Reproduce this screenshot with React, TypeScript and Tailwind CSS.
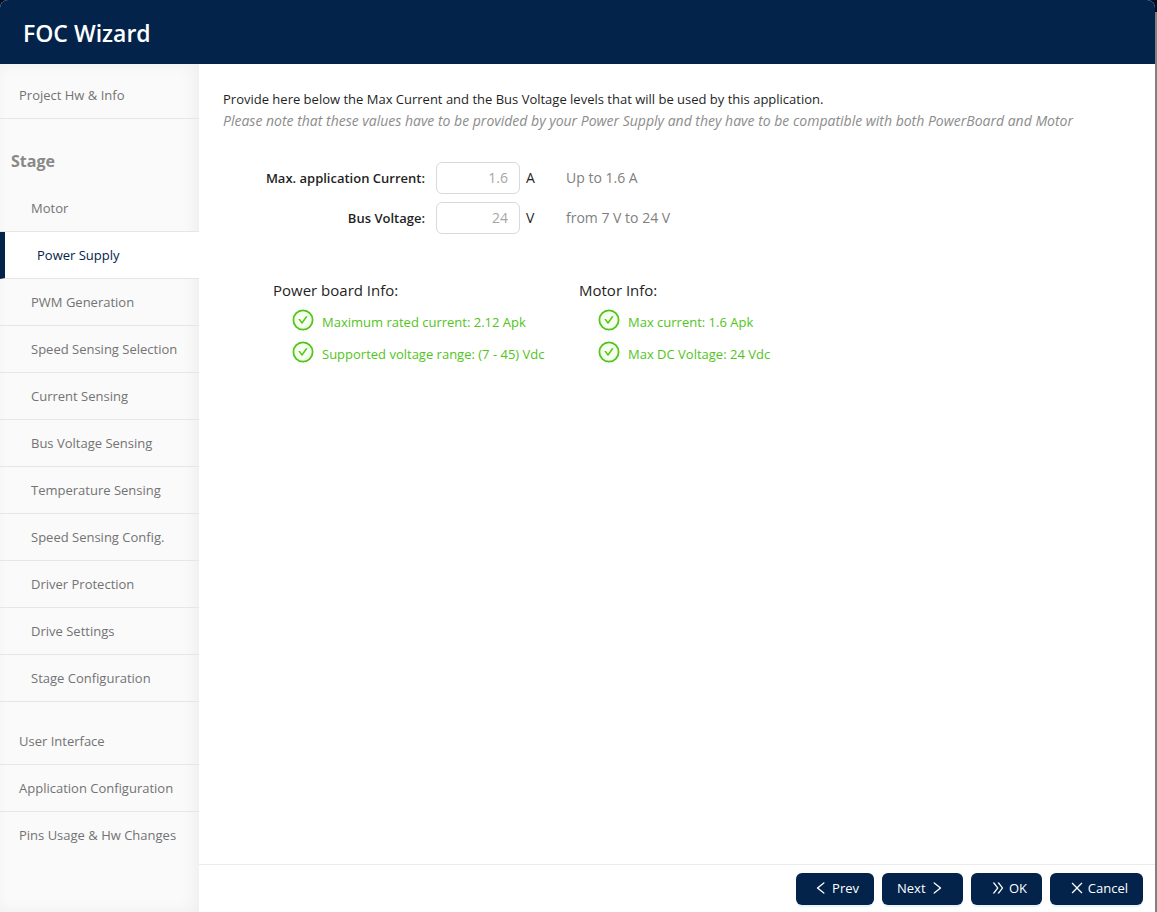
import { useId, useState } from "react";
import {
  AiOutlineClose,
  AiOutlineDoubleRight,
  AiOutlineLeft,
  AiOutlineRight,
} from "react-icons/ai";

const stageSteps = [
  "Motor",
  "Power Supply",
  "PWM Generation",
  "Speed Sensing Selection",
  "Current Sensing",
  "Bus Voltage Sensing",
  "Temperature Sensing",
  "Speed Sensing Config.",
  "Driver Protection",
  "Drive Settings",
  "Stage Configuration",
];

const finalSteps = ["User Interface", "Application Configuration", "Pins Usage & Hw Changes"];

function NavItem({ label, nested = false, active = false, last = false }: {
  label: string;
  nested?: boolean;
  active?: boolean;
  last?: boolean;
}) {
  const tone = active
    ? "border-l-[5px] border-l-[#03234b] bg-white pl-8 text-[#03234b]"
    : nested
      ? "pl-[31px] text-[#737373]"
      : "pl-[19px] text-[#737373]";
  return (
    <li>
      <a
        href="#"
        aria-current={active ? "step" : undefined}
        className={`flex h-[47px] items-center border-b whitespace-nowrap ${tone} ${last ? "border-b-transparent" : "border-b-[#e6e6e6]"}`}
      >
        {label}
      </a>
    </li>
  );
}

function CheckIcon() {
  return (
    <svg viewBox="0 0 1024 1024" className="size-6 shrink-0" aria-hidden="true">
      <circle cx="512" cy="512" r="410" fill="#f6ffed" stroke="#52c41a" strokeWidth="76" />
      <path
        fill="#52c41a"
        d="M699 353h-46.9c-10.2 0-19.9 4.9-25.9 13.3L469 584.3l-71.2-98.8c-6-8.3-15.6-13.3-25.9-13.3H325c-6.5 0-10.3 7.4-6.5 12.7l124.6 172.8a31.8 31.8 0 0 0 51.7 0l210.6-292c3.9-5.3.1-12.7-6.4-12.7z"
      />
    </svg>
  );
}

function Field({ label, unit, hint, initial }: {
  label: string;
  unit: string;
  hint: string;
  initial: string;
}) {
  const id = useId();
  const [value, setValue] = useState(initial);
  return (
    <div className="flex h-8 items-center text-[14px]">
      <label htmlFor={id} className="w-[202px] text-right text-[13px] font-semibold">
        {label}
      </label>
      <input
        id={id}
        value={value}
        onChange={(e) => setValue(e.target.value)}
        className="ml-[11px] h-8 w-[84px] rounded-md border border-[#d9d9d9] bg-white px-[11px] pb-[2px] text-right text-[#a6a6a6]"
      />
      <span className="ml-[6px] w-10">{unit}</span>
      <span className="text-[#808080]">{hint}</span>
    </div>
  );
}

function InfoBlock({ title, items }: { title: string; items: string[] }) {
  return (
    <section className="w-[306px]">
      <h2 className="text-[15px] leading-6 font-medium">{title}</h2>
      <ul className="pt-[2px] pl-[18px] text-[#52c41a]">
        {items.map((item) => (
          <li key={item} className="flex h-8 items-center gap-[7px] whitespace-nowrap">
            <CheckIcon />
            <span className="pt-1">{item}</span>
          </li>
        ))}
      </ul>
    </section>
  );
}

const buttonClass =
  "flex h-8 items-center rounded-md bg-[#03234b] pb-[2px] text-white shadow-[0_2px_0_#e6f4ff]";

export default function App() {
  return (
    <div className="flex min-h-screen bg-linear-to-b from-[#020f24] from-[12px] to-[#808080] to-[12px] pr-[2px] font-['Open_Sans','Noto_Sans',sans-serif] text-[13px] leading-[22px] text-[#1f1f1f]">
      <div className="flex grow flex-col overflow-hidden rounded-t-lg bg-white">
        <header className="flex h-16 items-center bg-[#03234b] px-[23px]">
          <h1 className="pt-[2px] text-[23px] leading-8 font-semibold text-white">FOC Wizard</h1>
        </header>
        <div className="flex grow">
          <nav
            aria-label="Wizard steps"
            className="w-[199px] shrink-0 bg-[#fafafa] pt-2 shadow-[inset_-4px_0_16px_rgba(0,0,0,0.05)]"
          >
            <ul>
              <NavItem label="Project Hw & Info" />
            </ul>
            <h2 className="px-[11px] pt-[30px] pb-3 text-[16px] leading-6 font-bold text-[#888888]">
              Stage
            </h2>
            <ul>
              {stageSteps.map((step) => (
                <NavItem key={step} label={step} nested active={step === "Power Supply"} />
              ))}
            </ul>
            <ul className="mt-4">
              {finalSteps.map((step, i) => (
                <NavItem key={step} label={step} last={i === finalSteps.length - 1} />
              ))}
            </ul>
          </nav>
          <div className="flex grow flex-col">
            <main className="grow px-6 pt-6">
              <p>
                Provide here below the Max Current and the Bus Voltage levels that will be used by this
                application.
              </p>
              <p className="text-[14px] text-[#8c8c8c] italic">
                Please note that these values have to be provided by your Power Supply and they have to be
                compatible with both PowerBoard and Motor
              </p>
              <div className="mt-[30px] flex flex-col gap-2">
                <Field label="Max. application Current:" unit="A" hint="Up to 1.6 A" initial="1.6" />
                <Field label="Bus Voltage:" unit="V" hint="from 7 V to 24 V" initial="24" />
              </div>
              <div className="mt-11 flex pl-[50px]">
                <InfoBlock
                  title="Power board Info:"
                  items={["Maximum rated current: 2.12 Apk", "Supported voltage range: (7 - 45) Vdc"]}
                />
                <InfoBlock title="Motor Info:" items={["Max current: 1.6 Apk", "Max DC Voltage: 24 Vdc"]} />
              </div>
            </main>
            <footer className="flex h-12 justify-end gap-2 border-t border-[#ebebeb] px-3 pt-2">
              <button type="button" className={`${buttonClass} w-[78px] justify-end gap-[3px] pr-[15px]`}>
                <AiOutlineLeft className="size-4" aria-hidden="true" />
                Prev
              </button>
              <button type="button" className={`${buttonClass} w-[81px] gap-[3px] pl-[15px]`}>
                Next
                <AiOutlineRight className="size-4" aria-hidden="true" />
              </button>
              <button type="button" className={`${buttonClass} w-[71px] justify-end gap-[3px] pr-[15px]`}>
                <AiOutlineDoubleRight className="size-4" aria-hidden="true" />
                OK
              </button>
              <button type="button" className={`${buttonClass} w-[93px] justify-end gap-[3px] pr-[15px]`}>
                <AiOutlineClose className="size-4" aria-hidden="true" />
                Cancel
              </button>
            </footer>
          </div>
        </div>
      </div>
    </div>
  );
}
